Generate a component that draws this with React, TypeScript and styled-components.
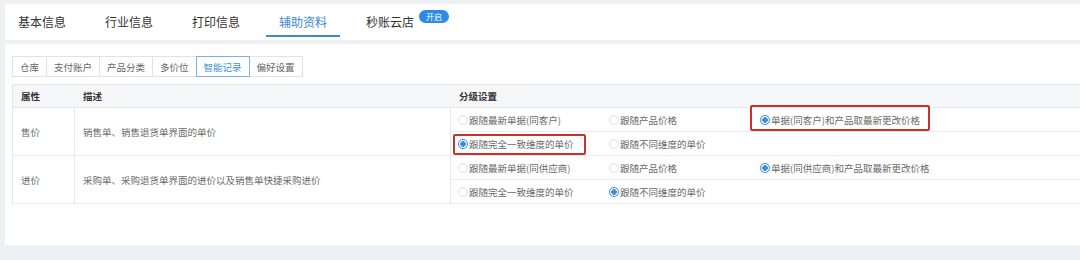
import React from "react";
import styled, { createGlobalStyle } from "styled-components";

const GlobalStyle = createGlobalStyle`
  html, body {
    margin: 0;
    padding: 0;
    background: #eef0f3;
    overflow: hidden;
    font-family: "Noto Sans CJK SC", "Noto Sans", sans-serif;
  }
`;

const Page = styled.div`
  width: 1110px;
  padding: 4px 0 0 5px;
  display: flex;
  flex-direction: column;
  gap: 4px;
`;

const TopBar = styled.div`
  height: 36px;
  background: #fff;
  display: flex;
  align-items: stretch;
  gap: 13px;
`;

const Tab = styled.div<{ $active?: boolean }>`
  display: flex;
  align-items: center;
  padding: 3px 13px 0;
  margin-bottom: 3px;
  font-size: 12px;
  color: ${(p) => (p.$active ? "#3a8bd0" : "#333")};
  border-bottom: 2px solid ${(p) => (p.$active ? "#3a8bd0" : "transparent")};
`;

const Badge = styled.span`
  display: inline-block;
  margin-left: 5px;
  position: relative;
  top: -5px;
  height: 13px;
  line-height: 13px;
  padding: 0 7px;
  border-radius: 7px;
  background: #2b8be6;
  color: #fff;
  font-size: 8px;
`;

const Panel = styled.div`
  height: 201px;
  background: #fff;
  box-sizing: border-box;
  padding: 12px 0 0 7px;
`;

const SubTabs = styled.div`
  display: flex;
  height: 21px;
  padding-left: 1px;
`;

const SubTab = styled.div<{ $active?: boolean }>`
  display: flex;
  align-items: center;
  padding: 0 7px;
  margin-left: -1px;
  font-size: 9.5px;
  color: ${(p) => (p.$active ? "#3d8fd6" : "#666")};
  border: 1px solid ${(p) => (p.$active ? "#7fb2de" : "#e2e2e2")};
  position: relative;
  z-index: ${(p) => (p.$active ? 1 : 0)};
  background: #fff;
`;

const Table = styled.div`
  margin-top: 7px;
  border: 1px solid #e8e8e8;
  border-right: none;
  font-size: 9.5px;
  color: #6a6a6a;
`;

const HeaderRow = styled.div`
  display: flex;
  height: 22px;
  background: #f5f6f8;
  border-bottom: 1px solid #e8e8e8;
  color: #333;
  font-weight: 600;
`;

const HeadCell = styled.div<{ $w?: number }>`
  width: ${(p) => (p.$w ? `${p.$w}px` : "auto")};
  flex: ${(p) => (p.$w ? "none" : "1")};
  display: flex;
  align-items: center;
  padding-left: 8px;
  box-sizing: border-box;
`;

const Row = styled.div`
  display: flex;
  border-bottom: 1px solid #e8e8e8;
  &:last-child {
    border-bottom: none;
  }
`;

const Cell = styled.div<{ $w: number }>`
  width: ${(p) => p.$w}px;
  flex: none;
  box-sizing: border-box;
  padding-left: 8px;
  display: flex;
  align-items: center;
  border-right: 1px solid #e8e8e8;
`;

const Options = styled.div`
  flex: 1;
  display: flex;
  flex-direction: column;
`;

const SubRow = styled.div`
  height: 23px;
  display: flex;
  border-bottom: 1px solid #ececec;
  &:last-child {
    border-bottom: none;
  }
`;

const OptionCell = styled.div`
  width: 151px;
  flex: none;
  display: flex;
  align-items: center;
  padding-left: 7px;
  box-sizing: border-box;
`;

const Option = styled.label<{ $mark?: "left" | "right" }>`
  display: inline-flex;
  align-items: center;
  position: relative;
  white-space: nowrap;
  &::after {
    content: "";
    display: ${(p) => (p.$mark ? "block" : "none")};
    position: absolute;
    top: ${(p) => (p.$mark === "right" ? "-8px" : "-3px")};
    bottom: -4px;
    left: ${(p) => (p.$mark === "right" ? "-10px" : "-5px")};
    right: ${(p) => (p.$mark === "right" ? "-10px" : "-12px")};
    border: 2px solid #c8312e;
    border-radius: 2px;
  }
`;

const Radio = styled.span<{ $on?: boolean }>`
  width: 10px;
  height: 10px;
  box-sizing: border-box;
  border-radius: 50%;
  margin-right: 1px;
  border: 1px solid ${(p) => (p.$on ? "#3d8ee0" : "#e3e3e3")};
  background: ${(p) =>
    p.$on ? "radial-gradient(circle, #3d8ee0 0 2.6px, #fff 3px)" : "#fff"};
  box-shadow: ${(p) => (p.$on ? "0 0 1px #9cc6ee" : "inset 0 1px 1px #f0f0f0")};
`;

type Opt = { text: string; on?: boolean; mark?: "left" | "right" };

const rows: { attr: string; desc: string; lines: Opt[][] }[] = [
  {
    attr: "售价",
    desc: "销售单、销售退货单界面的单价",
    lines: [
      [
        { text: "跟随最新单据(同客户)" },
        { text: "跟随产品价格" },
        { text: "单据(同客户)和产品取最新更改价格", on: true, mark: "right" },
      ],
      [
        { text: "跟随完全一致维度的单价", on: true, mark: "left" },
        { text: "跟随不同维度的单价" },
      ],
    ],
  },
  {
    attr: "进价",
    desc: "采购单、采购退货单界面的进价以及销售单快捷采购进价",
    lines: [
      [
        { text: "跟随最新单据(同供应商)" },
        { text: "跟随产品价格" },
        { text: "单据(同供应商)和产品取最新更改价格", on: true },
      ],
      [
        { text: "跟随完全一致维度的单价" },
        { text: "跟随不同维度的单价", on: true },
      ],
    ],
  },
];

const tabs = ["基本信息", "行业信息", "打印信息", "辅助资料", "秒账云店"];
const subTabs = ["仓库", "支付账户", "产品分类", "多价位", "智能记录", "偏好设置"];

export default function App() {
  return (
    <>
      <GlobalStyle />
      <Page>
        <TopBar>
          {tabs.map((t) => (
            <Tab key={t} $active={t === "辅助资料"}>
              {t}
              {t === "秒账云店" && <Badge>开启</Badge>}
            </Tab>
          ))}
        </TopBar>
        <Panel>
          <SubTabs>
            {subTabs.map((t) => (
              <SubTab key={t} $active={t === "智能记录"}>
                {t}
              </SubTab>
            ))}
          </SubTabs>
          <Table>
            <HeaderRow>
              <HeadCell $w={62}>属性</HeadCell>
              <HeadCell $w={376}>描述</HeadCell>
              <HeadCell>分级设置</HeadCell>
            </HeaderRow>
            {rows.map((r) => (
              <Row key={r.attr}>
                <Cell $w={62}>{r.attr}</Cell>
                <Cell $w={376}>{r.desc}</Cell>
                <Options>
                  {r.lines.map((line, i) => (
                    <SubRow key={i}>
                      {line.map((o) => (
                        <OptionCell key={o.text}>
                          <Option $mark={o.mark}>
                            <Radio $on={o.on} />
                            {o.text}
                          </Option>
                        </OptionCell>
                      ))}
                    </SubRow>
                  ))}
                </Options>
              </Row>
            ))}
          </Table>
        </Panel>
      </Page>
    </>
  );
}
